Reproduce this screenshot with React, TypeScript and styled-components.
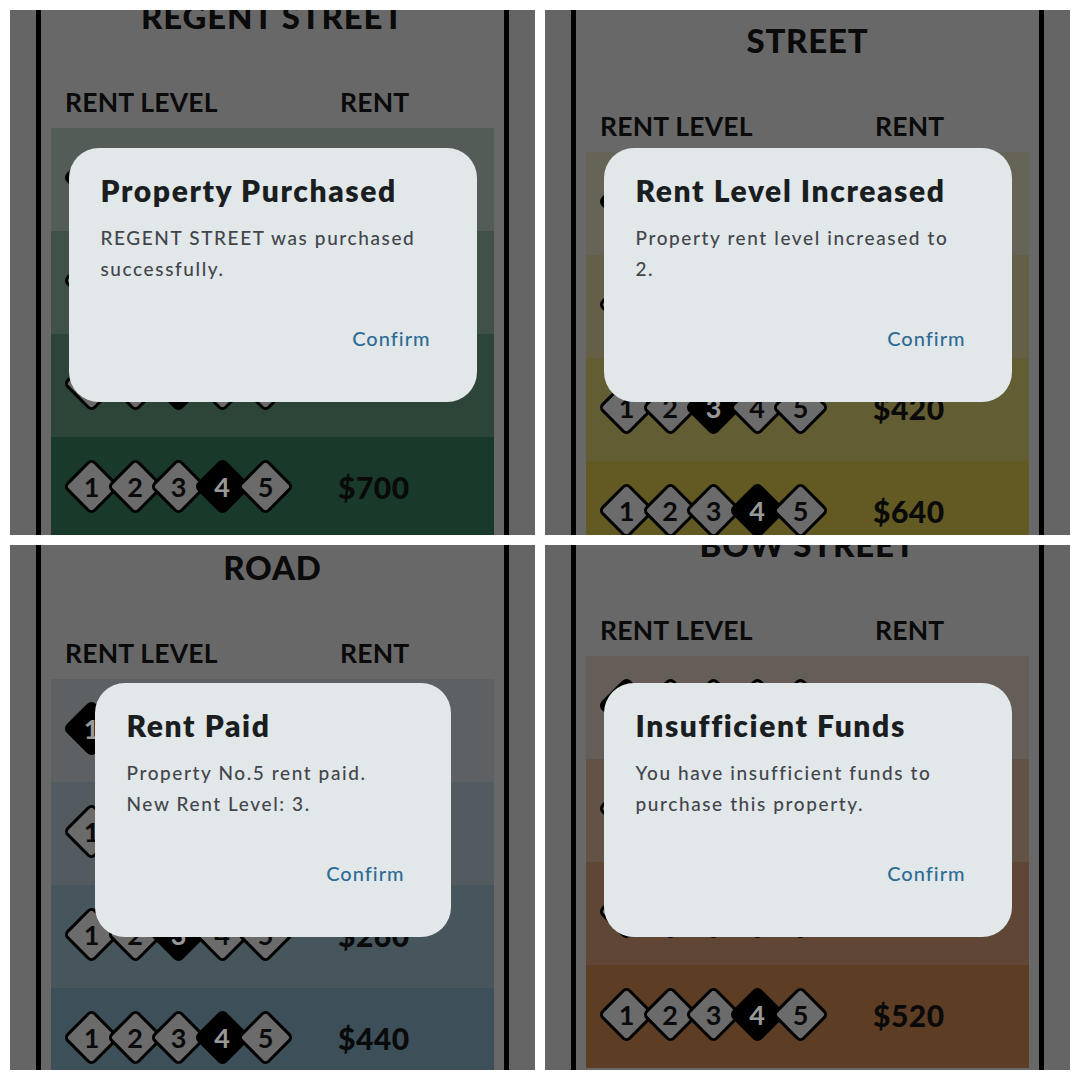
import React from 'react';
import styled, { createGlobalStyle } from 'styled-components';

const GlobalStyle = createGlobalStyle`
  html, body {
    margin: 0;
    padding: 0;
    background: #ffffff;
  }
  body {
    font-family: Lato, "Noto Sans", sans-serif;
  }
  * { box-sizing: border-box; }
`;

const Board = styled.main`
  display: grid;
  grid-template-columns: repeat(2, 525px);
  grid-auto-rows: 525px;
  gap: 10px;
  padding: 10px;
  width: 1080px;
`;

const Panel = styled.section`
  position: relative;
  overflow: hidden;
  background: #a8a8a8;
`;

const Sheet = styled.div`
  height: 100%;
  margin: 0 26px;
  padding: 0 10px;
  border-left: 5px solid #000;
  border-right: 5px solid #000;
  background: #adadad;
  overflow: hidden;
`;

const Content = styled.div<{ $offset: number }>`
  display: flex;
  flex-direction: column;
  margin-top: ${(p) => p.$offset}px;
`;

const CardTitle = styled.h2`
  margin: 0;
  font: 900 33px/40px Lato, "Noto Sans", sans-serif;
  letter-spacing: 0.8px;
  text-align: center;
  color: #111;
`;

const TableHead = styled.div`
  display: grid;
  grid-template-columns: 275px 1fr;
  margin: 49px 0 9px;
  padding-left: 14px;
  font: 700 26.5px/34px Lato, "Noto Sans", sans-serif;
  letter-spacing: 0.2px;
  color: #111;
`;

const RentRow = styled.div<{ $bg: string }>`
  display: grid;
  grid-template-columns: 275px 1fr;
  align-items: center;
  height: 103px;
  padding: 0 0 4px 12px;
  background: ${(p) => p.$bg};
`;

const Levels = styled.div`
  display: flex;
  align-items: center;
`;

const Level = styled.div<{ $active: boolean }>`
  position: relative;
  width: 57px;
  height: 57px;
  display: flex;
  align-items: center;
  justify-content: center;
  & + & {
    margin-left: -13.5px;
  }
  &::before {
    content: '';
    position: absolute;
    inset: 8px;
    transform: rotate(45deg);
    border: 3px solid #000;
    border-radius: 6px;
    background: ${(p) => (p.$active ? '#000' : '#b2b2b2')};
  }
`;

const LevelNum = styled.span<{ $active: boolean }>`
  position: relative;
  font: 700 27px/1 Lato, "Noto Sans", sans-serif;
  color: ${(p) => (p.$active ? '#fff' : '#111')};
`;

const Price = styled.span`
  font: 900 30px/1 Lato, "Noto Sans", sans-serif;
  letter-spacing: 0.5px;
  color: #111;
`;

const Scrim = styled.div`
  position: absolute;
  inset: 0;
  padding-top: 5px;
  display: flex;
  align-items: center;
  justify-content: center;
  background: rgba(0, 0, 0, 0.4);
`;

const Dialog = styled.div<{ $width: number }>`
  width: ${(p) => p.$width}px;
  padding: 24px 24px 44px 32px;
  border-radius: 30px;
  background: #e2e7ea;
`;

const DialogTitle = styled.h3`
  margin: 0;
  font: 800 30px/36px Lato, "Noto Sans", sans-serif;
  letter-spacing: 1.6px;
  color: #1b1e21;
`;

const DialogBody = styled.p`
  margin: 14px 0 0;
  font: 500 19px/31px Lato, "Noto Sans", sans-serif;
  letter-spacing: 1.6px;
  white-space: pre-line;
  color: #42464b;
`;

const Actions = styled.div`
  display: flex;
  justify-content: flex-end;
  margin-top: 34px;
`;

const TextButton = styled.button`
  height: 40px;
  padding: 8px 22px 8px 20px;
  border: none;
  background: none;
  font: 500 20px/24px Lato, "Noto Sans", sans-serif;
  letter-spacing: 1px;
  color: #2e6b94;
  cursor: pointer;
`;

type Screen = {
  title: string;
  offset: number;
  rgb: string;
  prices: string[];
  dialogTitle: string;
  dialogBody: string;
  dialogWidth: number;
};

const screens: Screen[] = [
  {
    title: 'REGENT STREET',
    offset: -14,
    rgb: '43, 97, 70',
    prices: ['$60', '$200', '$460', '$700'],
    dialogTitle: 'Property Purchased',
    dialogBody: 'REGENT STREET was purchased\nsuccessfully.',
    dialogWidth: 408,
  },
  {
    title: 'STREET',
    offset: 10,
    rgb: '163, 150, 57',
    prices: ['$50', '$180', '$420', '$640'],
    dialogTitle: 'Rent Level Increased',
    dialogBody: 'Property rent level increased to\n2.',
    dialogWidth: 408,
  },
  {
    title: 'ROAD',
    offset: 2,
    rgb: '102, 132, 148',
    prices: ['$20', '$100', '$260', '$440'],
    dialogTitle: 'Rent Paid',
    dialogBody: 'Property No.5 rent paid.\nNew Rent Level: 3.',
    dialogWidth: 356,
  },
  {
    title: 'BOW STREET',
    offset: -21,
    rgb: '157, 102, 62',
    prices: ['$30', '$140', '$340', '$520'],
    dialogTitle: 'Insufficient Funds',
    dialogBody: 'You have insufficient funds to\npurchase this property.',
    dialogWidth: 408,
  },
];

const alphas = [0.25, 0.5, 0.75, 1];

function PropertyScreen({ s }: { s: Screen }) {
  return (
    <Panel>
      <Sheet>
        <Content $offset={s.offset}>
          <CardTitle>{s.title}</CardTitle>
          <TableHead>
            <span>RENT LEVEL</span>
            <span>RENT</span>
          </TableHead>
          {s.prices.map((price, i) => (
            <RentRow key={i} $bg={`rgba(${s.rgb}, ${alphas[i]})`}>
              <Levels>
                {[1, 2, 3, 4, 5].map((n) => (
                  <Level key={n} $active={n === i + 1}>
                    <LevelNum $active={n === i + 1}>{n}</LevelNum>
                  </Level>
                ))}
              </Levels>
              <Price>{price}</Price>
            </RentRow>
          ))}
        </Content>
      </Sheet>
      <Scrim>
        <Dialog $width={s.dialogWidth} role="dialog">
          <DialogTitle>{s.dialogTitle}</DialogTitle>
          <DialogBody>{s.dialogBody}</DialogBody>
          <Actions>
            <TextButton>Confirm</TextButton>
          </Actions>
        </Dialog>
      </Scrim>
    </Panel>
  );
}

export default function App() {
  return (
    <>
      <GlobalStyle />
      <Board>
        {screens.map((s) => (
          <PropertyScreen key={s.dialogTitle} s={s} />
        ))}
      </Board>
    </>
  );
}
